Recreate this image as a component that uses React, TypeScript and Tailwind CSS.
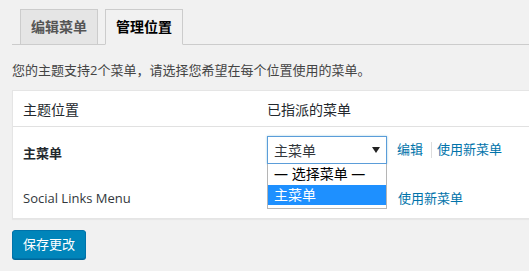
const font = "font-['Open_Sans','Noto_Sans_CJK_SC',sans-serif]";

function Tab({ label, active, className = "" }: { label: string; active?: boolean; className?: string }) {
  return (
    <div
      className={`-mb-px h-[36px] border border-[#ccc] px-[10px] text-[14px] font-semibold leading-[34px] ${
        active ? "border-b-[#f1f1f1] bg-[#f1f1f1] text-black" : "bg-[#e5e5e5] text-[#555]"
      } ${className}`}
    >
      {label}
    </div>
  );
}

function Arrow() {
  return (
    <svg width="8" height="6" viewBox="0 0 8 6" className="block">
      <path d="M0 0h8L4 6z" fill="#222" />
    </svg>
  );
}

export default function App() {
  return (
    <div className={`relative h-[271px] w-[529px] overflow-hidden bg-[#f1f1f1] text-[#23282d] ${font}`}>
      {/* tabs */}
      <div className="ml-3 flex items-end border-b border-[#ccc] pt-[9px]">
        <Tab label="编辑菜单" className="ml-2" />
        <Tab label="管理位置" active className="ml-[7px]" />
      </div>

      <p className="ml-3 mt-[15px] text-[13px] leading-5 text-[#444]">
        您的主题支持2个菜单，请选择您希望在每个位置使用的菜单。
      </p>

      {/* locations table */}
      <div className="ml-3 mt-[10px] w-[530px] border border-[#e5e5e5] bg-white text-[13px] shadow-[0_1px_1px_rgba(0,0,0,0.04)]">
        <div className="flex h-[36px] items-center border-b border-[#e1e1e1] pt-[2px] text-[14px] leading-5">
          <div className="w-[244px] px-[10px]">主题位置</div>
          <div className="px-[10px]">已指派的菜单</div>
        </div>

        <div className="flex h-[47px] items-start">
          <div className="w-[244px] px-[10px] pt-[16px] text-[13px] font-bold leading-5">主菜单</div>
          <div className="flex items-center pl-[10px] pt-[9px]">
            <div className="flex h-[28px] w-[120px] items-center justify-between border border-[#5b9dd9] pl-[6px] pr-[6px] text-[14px] text-[#32373c] shadow-[0_0_2px_rgba(30,140,190,0.4)]">
              <span>主菜单</span>
              <Arrow />
            </div>
            <a className="ml-[10px] text-[13px] text-[#0073aa]">编辑</a>
            <span className="ml-[8px] h-[16px] w-px bg-[#ddd]" />
            <a className="ml-[5px] text-[13px] text-[#0073aa]">使用新菜单</a>
          </div>
        </div>

        <div className="flex h-[44px] items-start">
          <div className="w-[244px] px-[10px] pt-[14px] text-[13px] font-medium leading-5 text-[#32373c]">
            Social Links Menu
          </div>
          <div className="flex items-start pl-[10px] pt-[14px]">
            <div className="w-[120px]" />
            <a className="ml-[11px] text-[13px] leading-5 text-[#0073aa]">使用新菜单</a>
          </div>
        </div>
      </div>

      <button className="ml-3 mt-[11px] h-[29px] rounded-[3px] border border-[#0073aa] bg-[#0085ba] px-[10px] text-[13px] text-white shadow-[0_1px_0_#006799]">
        保存更改
      </button>

      {/* open dropdown list */}
      <div className="absolute left-[267px] top-[164px] h-[45px] w-[120px] border border-t-0 border-[#b5b5b5] bg-white text-[14px] leading-5">
        <div className="h-[21px] pl-[6px] text-black">— 选择菜单 —</div>
        <div className="h-[20px] bg-[#1e90ff] pl-[6px] text-white">主菜单</div>
      </div>
    </div>
  );
}
